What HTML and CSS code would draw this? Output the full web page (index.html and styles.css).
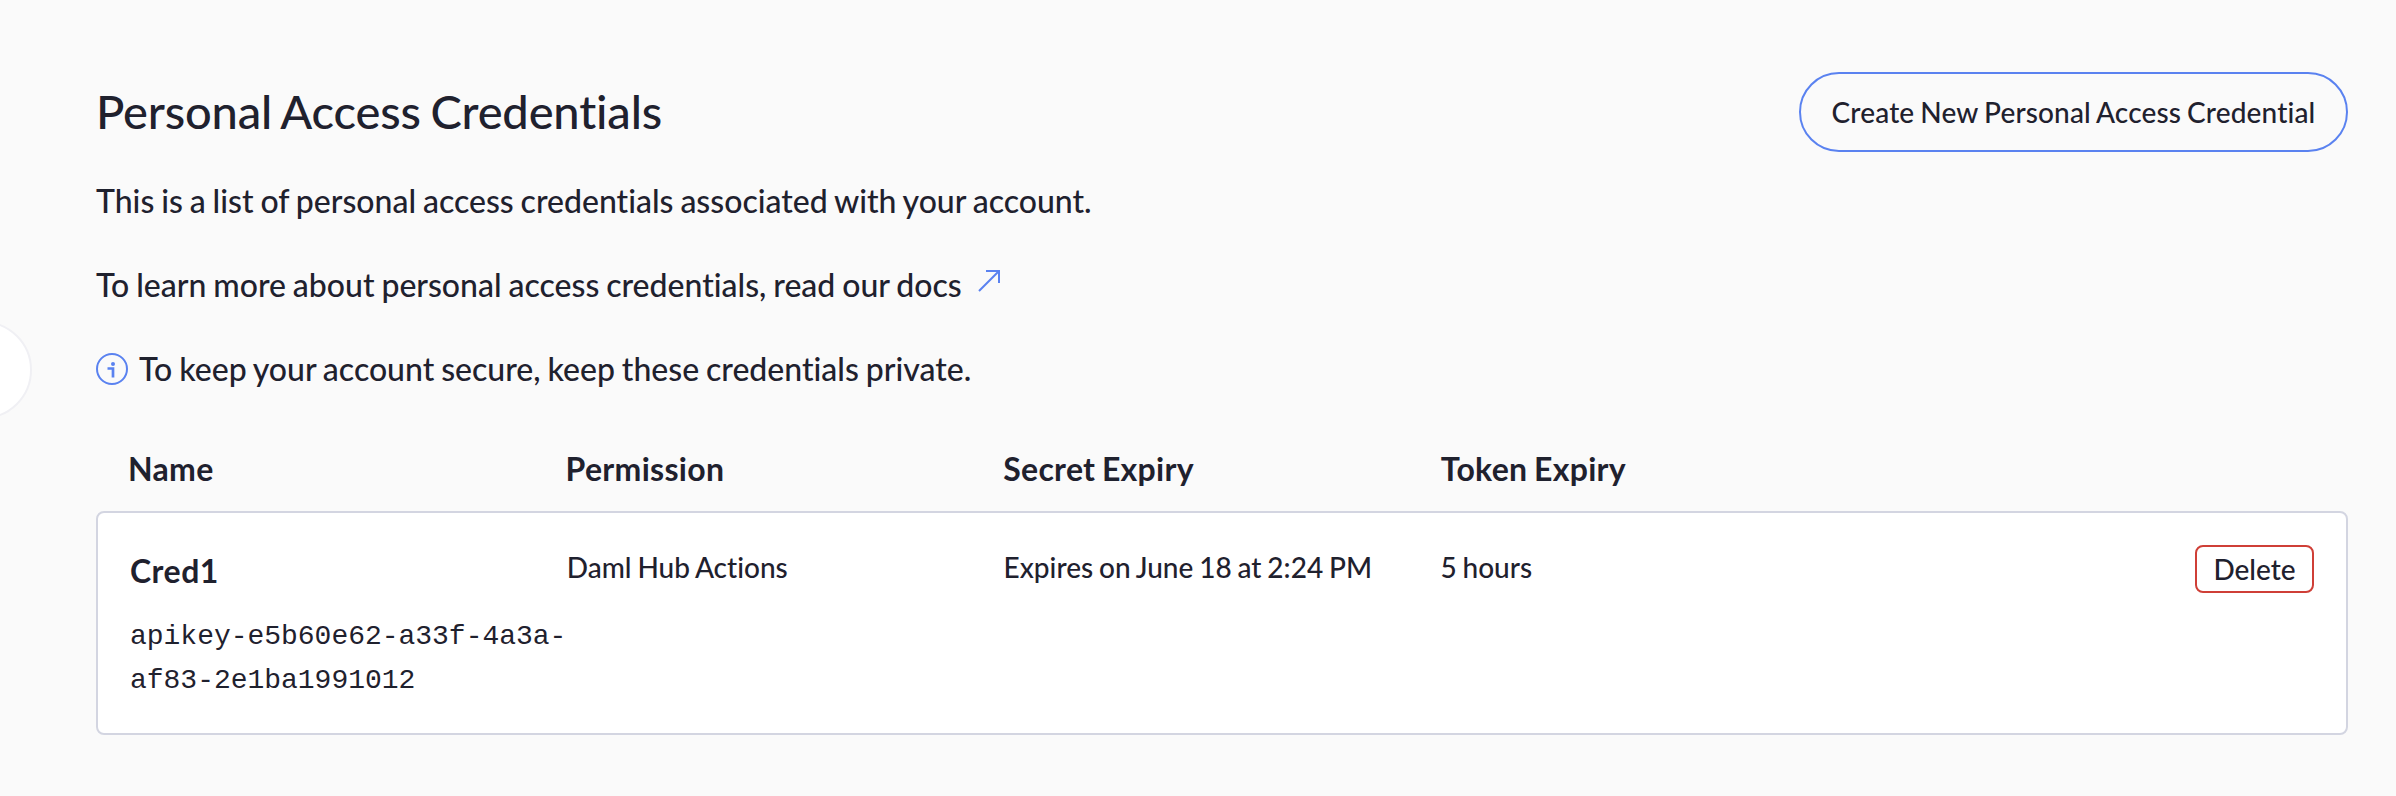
FILE: index.html
```
<!DOCTYPE html>
<html lang="en">
<head>
    <meta charset="UTF-8">
    <title>Personal Access Credentials</title>
    <link rel="stylesheet" href="styles.css">
</head>
<body>
    <div class="sidebar-toggle"></div>

    <main class="page">
        <header class="page-header">
            <h1>Personal Access Credentials</h1>
            <button class="create-button">Create New Personal Access Credential</button>
        </header>

        <p>This is a list of personal access credentials associated with your account.</p>
        <p>To learn more about personal access credentials, <a href="#">read our docs
            <svg class="arrow-icon" viewBox="0 0 24 24"><path d="M1 22L21 2M8 2h13v12"/></svg></a></p>
        <p class="notice">
            <svg class="info-icon" viewBox="0 0 32 32"><circle cx="16" cy="16" r="15"/><path class="stem" d="M11.500 15.500h5.500v9"/><circle class="dot" cx="17" cy="11" r="2"/></svg>
            To keep your account secure, keep these credentials private.
        </p>

        <div class="row table-head">
            <div>Name</div>
            <div>Permission</div>
            <div>Secret Expiry</div>
            <div>Token Expiry</div>
        </div>
        <div class="row credential">
            <div>
                <h2>Cred1</h2>
                <code>apikey-e5b60e62-a33f-4a3a-af83-2e1ba1991012</code>
            </div>
            <div class="cell">Daml Hub Actions</div>
            <div class="cell">Expires on June 18 at 2:24 PM</div>
            <div class="cell">5 hours</div>
            <button class="delete-button">Delete</button>
        </div>
    </main>
</body>
</html>
```
FILE: styles.css
```
* {
    box-sizing: border-box;
}
body {
    margin: 0;
    height: 796px;
    overflow: hidden;
    background: #fafafa;
    color: #1f212e;
    font-family: Lato, sans-serif;
    font-size: 32px;
    font-weight: 500;
    font-variant-ligatures: none;
}
.sidebar-toggle {
    position: absolute;
    left: -66px;
    top: 321px;
    width: 98px;
    height: 98px;
    border: 2px solid #f0f0f4;
    border-radius: 50%;
    background: #fff;
}
.page {
    padding: 72px 48px 0 96px;
}
.page-header {
    display: flex;
    justify-content: space-between;
    align-items: center;
    height: 80px;
    margin-bottom: 25px;
}
h1 {
    margin: 0 0 3px;
    font-size: 47px;
    font-weight: 500;
    letter-spacing: -0.15px;
    word-spacing: -2px;
}
button {
    font-family: inherit;
    font-weight: 500;
    color: inherit;
    background: none;
}
.create-button {
    width: 549px;
    height: 80px;
    padding: 0;
    border: 2px solid #5a82f0;
    border-radius: 40px;
    font-size: 28px;
    letter-spacing: 0.15px;
    word-spacing: -1.2px;
}
p {
    margin: 0 0 36px;
    line-height: 48px;
    word-spacing: -1.2px;
}
a {
    color: inherit;
    text-decoration: none;
}
svg {
    fill: none;
    stroke: #5a82f0;
    stroke-width: 2;
}
.arrow-icon {
    width: 24px;
    height: 24px;
    margin-left: 9px;
    vertical-align: 4px;
}
.notice {
    display: flex;
    align-items: center;
    gap: 11px;
}
.info-icon {
    width: 32px;
    height: 32px;
}
.info-icon .stem {
    stroke-width: 2.7;
}
.info-icon .dot {
    fill: #5a82f0;
    stroke: none;
}
.row {
    display: grid;
    grid-template-columns: repeat(5, minmax(0, 1fr));
}
.table-head {
    padding: 10px 32px 0;
    height: 82px;
    line-height: 60px;
    font-weight: 700;
    letter-spacing: 0.3px;
    word-spacing: -1.5px;
}
.credential {
    height: 224px;
    padding: 32px;
    border: 2px solid #d3d5e1;
    border-radius: 8px;
    background: #fff;
}
h2 {
    margin: 0 0 18px;
    font-size: 32px;
    line-height: 52px;
    letter-spacing: 0.5px;
}
code {
    display: block;
    font-family: "Liberation Mono", monospace;
    font-size: 28px;
    line-height: 44px;
    letter-spacing: -0.02px;
}
.cell {
    font-size: 28px;
    line-height: 44px;
    word-spacing: -1.2px;
}
.delete-button {
    justify-self: end;
    width: 119px;
    height: 48px;
    padding: 0;
    border: 2px solid #cf3f37;
    border-radius: 8px;
    font-size: 28px;
}
```
